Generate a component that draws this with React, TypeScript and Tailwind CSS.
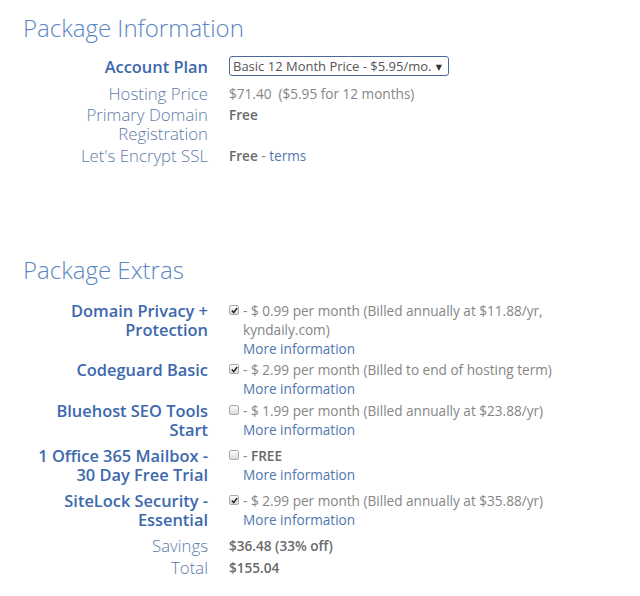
import React from "react";

function Check({ checked }: { checked: boolean }) {
  return (
    <span className="mt-[4px] mr-[4px] inline-flex h-[10px] w-[10px] shrink-0 items-center justify-center rounded-[2px] border border-[#a9a9a9] bg-gradient-to-b from-[#fcfcfc] to-[#dcdcdc]">
      {checked && (
        <svg width="7" height="7" viewBox="0 0 7 7">
          <path d="M0.8 3.6 L2.7 5.6 L6.2 1" fill="none" stroke="#222" strokeWidth="1.5" />
        </svg>
      )}
    </span>
  );
}

const More = () => <div className="text-[#5077b0]">More information</div>;

function Row({
  label,
  strong,
  children,
  className = "",
}: {
  label: React.ReactNode;
  strong?: boolean;
  children: React.ReactNode;
  className?: string;
}) {
  return (
    <div className={`flex ${className}`}>
      <div
        className={`w-[208px] shrink-0 text-right ${
          strong
            ? "text-[16.4px] font-semibold text-[#3c68ad]"
            : "text-[16.8px] font-light text-[#5d7ba8]"
        } leading-[19px]`}
      >
        {label}
      </div>
      <div className="ml-[21px] text-[13.6px] leading-[19px] text-[#858585]">{children}</div>
    </div>
  );
}

function Extra({
  label,
  checked,
  children,
  className = "",
}: {
  label: React.ReactNode;
  checked: boolean;
  children: React.ReactNode;
  className?: string;
}) {
  return (
    <Row label={label} strong className={className}>
      <div className="flex">
        <Check checked={checked} />
        <div>{children}</div>
      </div>
    </Row>
  );
}

export default function App() {
  return (
    <div
      className="h-[596px] w-[640px] bg-white"
      style={{ fontFamily: '"Open Sans", "DejaVu Sans", sans-serif' }}
    >
      <div className="pt-[12px]">
        <h1 className="pl-[23px] text-[24px] font-light leading-[32px] text-[#5b86c3]">
          Package Information
        </h1>
        <Row label="Account Plan" strong className="mt-[12px] items-center">
          <div className="flex h-[20px] w-[220px] items-center justify-between overflow-hidden whitespace-nowrap rounded-[3px] border border-[#4a6a9c] pl-[3px] pr-[6px] text-[13px] text-[#555]">
            <span>Basic 12 Month Price - $5.95/mo.</span>
            <span className="text-[8px] text-[#333]">▼</span>
          </div>
        </Row>
        <Row label="Hosting Price" className="mt-[8px]">
          $71.40&nbsp; ($5.95 for 12 months)
        </Row>
        <Row label={<>Primary Domain<br />Registration</>} className="mt-[2px]">
          <span className="font-semibold text-[#6a6a6a]">Free</span>
        </Row>
        <Row label="Let's Encrypt SSL" className="mt-[3px]">
          <span className="font-semibold text-[#6a6a6a]">Free</span>
          <span> - </span>
          <span className="text-[#5077b0]">terms</span>
        </Row>

        <h1 className="mt-[89px] pl-[23px] text-[24px] font-light leading-[32px] text-[#5b86c3]">
          Package Extras
        </h1>
        <Extra label={<>Domain Privacy +<br />Protection</>} checked className="mt-[15px]">
          <div>- $ 0.99 per month (Billed annually at $11.88/yr,</div>
          <div>kyndaily.com)</div>
          <More />
        </Extra>
        <Extra label="Codeguard Basic" checked className="mt-[2px]">
          <div>- $ 2.99 per month (Billed to end of hosting term)</div>
          <More />
        </Extra>
        <Extra label={<>Bluehost SEO Tools<br />Start</>} checked={false} className="mt-[3px]">
          <div>- $ 1.99 per month (Billed annually at $23.88/yr)</div>
          <More />
        </Extra>
        <Extra label={<>1 Office 365 Mailbox -<br />30 Day Free Trial</>} checked={false} className="mt-[7px]">
          <div>
            - <span className="font-semibold text-[#6a6a6a]">FREE</span>
          </div>
          <More />
        </Extra>
        <Extra label={<>SiteLock Security -<br />Essential</>} checked className="mt-[7px]">
          <div>- $ 2.99 per month (Billed annually at $35.88/yr)</div>
          <More />
        </Extra>
        <Row label="Savings" className="mt-[7px]">
          <span className="font-semibold text-[#6a6a6a]">$36.48 (33% off)</span>
        </Row>
        <Row label="Total" className="mt-[3px]">
          <span className="font-semibold text-[#6a6a6a]">$155.04</span>
        </Row>
      </div>
    </div>
  );
}
